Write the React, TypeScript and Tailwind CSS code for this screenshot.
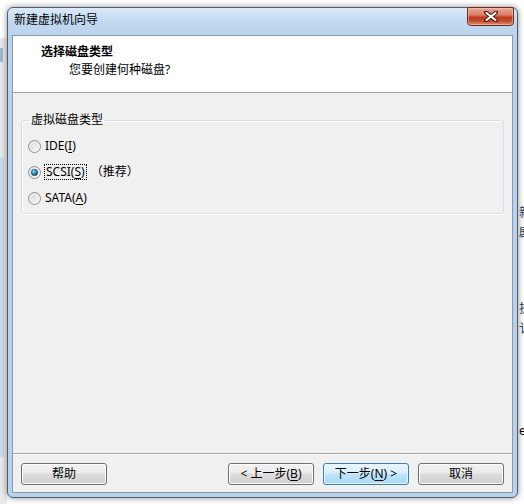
import React from "react";

const F = "font-['Noto_Sans','Noto_Sans_CJK_SC',sans-serif]";

function Radio({ checked }: { checked?: boolean }) {
  return (
    <svg width="13" height="13" viewBox="0 0 13 13" className="shrink-0">
      <defs>
        <linearGradient id={checked ? "rgc" : "rgu"} x1="0" y1="0" x2="1" y2="1">
          <stop offset="0" stopColor="#d2d2d2" />
          <stop offset="1" stopColor="#ffffff" />
        </linearGradient>
        <radialGradient id="dotg" cx="0.4" cy="0.35" r="0.7">
          <stop offset="0" stopColor="#a6e1fb" />
          <stop offset="0.5" stopColor="#2b87c0" />
          <stop offset="1" stopColor="#0d3c5e" />
        </radialGradient>
      </defs>
      <circle cx="6.5" cy="6.5" r="6" fill={`url(#${checked ? "rgc" : "rgu"})`} stroke="#8e8f8f" strokeWidth="1" />
      <circle cx="6.5" cy="6.5" r="4.5" fill="none" stroke="#f4f4f4" strokeWidth="1" />
      {checked && <circle cx="6.5" cy="6.5" r="3.2" fill="url(#dotg)" stroke="#1d4f73" strokeWidth="0.6" />}
    </svg>
  );
}

function Btn({ children, def }: { children: React.ReactNode; def?: boolean }) {
  return (
    <div
      className={
        "w-[86px] h-[22px] rounded-[3px] border flex items-center justify-center text-[12px] text-black " +
        (def
          ? "border-[#3c7fb1] bg-[linear-gradient(#eaf6fd_0%,#d9f0fc_45%,#bee6fd_50%,#a7d9f5_100%)] shadow-[inset_0_0_0_1px_#e6f4fc]"
          : "border-[#707070] bg-[linear-gradient(#f2f2f2_0%,#ebebeb_45%,#dddddd_50%,#cfcfcf_100%)] shadow-[inset_0_0_0_1px_#fcfcfc]")
      }
    >
      {children}
    </div>
  );
}

export default function App() {
  return (
    <div className={"w-[524px] h-[504px] bg-white flex overflow-hidden " + F}>
      {/* left background strip */}
      <div className="w-[7px] shrink-0 flex flex-col">
        <div className="h-[38px] bg-white" />
        <div className="flex-1 bg-[#e9e9ea] flex flex-col">
          <div className="h-[10px]" />
          <div className="w-[3px] h-[14px] bg-[#9fb6cf]" />
          <div className="h-[95px]" />
          <div className="w-[4px] h-[300px] bg-[#c9dcef]" />
        </div>
      </div>

      {/* window */}
      <div className="mt-[7px] w-[511px] h-[491px] shrink-0 rounded-[6px] border border-[#4f5d70] bg-[linear-gradient(#dbe9f8_0px,#c1d8f0_14px,#b9d1ea_30px,#b9d1ea_100%)] shadow-[0_0_6px_rgba(0,0,0,0.45)] flex flex-col px-[4px] pb-[4px]">
        <div className="h-[27px] flex items-start justify-between">
          <span className="mt-[4px] ml-[2px] text-[12px] leading-[16px] text-black">新建虚拟机向导</span>
          <div className="-mt-[1px] -mr-[1px] w-[47px] h-[19px] rounded-b-[4px] rounded-t-[2px] border border-[#6b2a1e] bg-[linear-gradient(#e8a794_0%,#d9826b_40%,#c0391f_55%,#c24a2f_75%,#e08c6f_100%)] shadow-[inset_0_0_0_1px_rgba(255,220,210,0.45)] flex items-center justify-center">
            <svg width="14" height="11" viewBox="0 0 14 11">
              <path d="M2 1.5 L12 9.5 M12 1.5 L2 9.5" stroke="#4a1a12" strokeWidth="4" strokeLinecap="round" />
              <path d="M2.5 2 L11.5 9 M11.5 2 L2.5 9" stroke="#ffffff" strokeWidth="2.2" strokeLinecap="round" />
            </svg>
          </div>
        </div>

        {/* client */}
        <div className="flex-1 border border-[#8a99ad] bg-[#f0f0f0] flex flex-col">
          <div className="h-[57px] bg-white border-b border-[#a0a0a0] pt-[7px] text-[12px] leading-[18px] text-black">
            <div className="pl-[28px] font-bold">选择磁盘类型</div>
            <div className="pl-[56px]">您要创建何种磁盘?</div>
          </div>

          <fieldset className="mx-[8px] mt-[19px] rounded-[3px] border border-[#d5dfe5] shadow-[0_1px_0_#ffffff,inset_1px_1px_0_#ffffff] pl-[6px] pt-[5px] pb-[2px]">
            <legend className="ml-[1px] px-[2px] text-[12px] leading-[16px] text-black">虚拟磁盘类型</legend>
            <div className="flex flex-col text-[12px] text-black">
              <div className="h-[26px] flex items-center">
                <Radio />
                <span className="ml-[4px] leading-[16px]">
                  IDE(<u className="underline underline-offset-2">I</u>)
                </span>
              </div>
              <div className="h-[26px] flex items-center">
                <Radio checked />
                <span className="ml-[3px] px-[1px] leading-[14px] border border-dotted border-black">
                  SCSI(<u className="underline underline-offset-2">S</u>)
                </span>
                <span className="ml-[4px] leading-[16px]">（推荐）</span>
              </div>
              <div className="h-[26px] flex items-center">
                <Radio />
                <span className="ml-[4px] leading-[16px]">
                  SATA(<u className="underline underline-offset-2">A</u>)
                </span>
              </div>
            </div>
          </fieldset>

          <div className="flex-1" />

          <div className="border-t border-[#a0a0a0] shadow-[inset_0_1px_0_#ffffff] pt-[9px] pb-[7px] px-[8px] flex items-center justify-between">
            <Btn>帮助</Btn>
            <div className="flex gap-[9px]">
              <Btn>
                &lt; 上一步(<u className="underline underline-offset-2">B</u>)
              </Btn>
              <Btn def>
                下一步(<u className="underline underline-offset-2">N</u>) &gt;
              </Btn>
              <Btn>取消</Btn>
            </div>
          </div>
        </div>
      </div>

      {/* right background fragments */}
      <div className="flex-1 overflow-hidden flex flex-col text-[12px] leading-[16px] text-[#1e395b] pl-[1px]">
        <div className="h-[205px]" />
        <div>新</div>
        <div className="mt-[4px]">剧</div>
        <div className="mt-[60px]">折</div>
        <div className="mt-[4px]">讠</div>
        <div className="mt-[86px] text-black">e</div>
      </div>
    </div>
  );
}
